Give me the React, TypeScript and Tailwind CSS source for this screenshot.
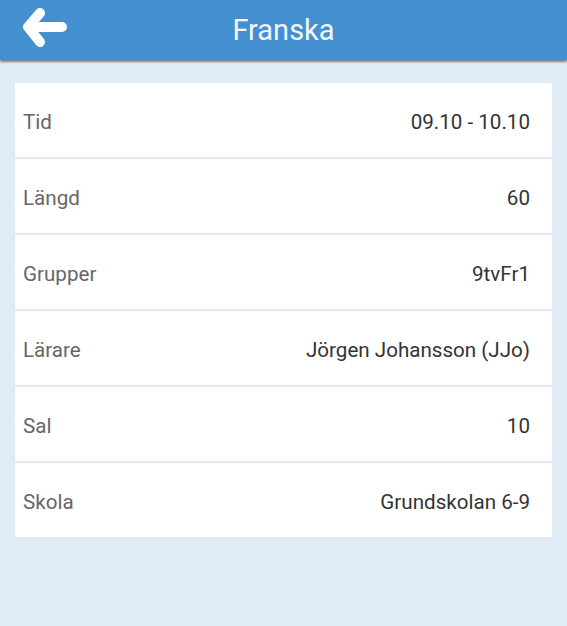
const rows = [
  { label: "Tid", value: "09.10 - 10.10" },
  { label: "Längd", value: "60" },
  { label: "Grupper", value: "9tvFr1" },
  { label: "Lärare", value: "Jörgen Johansson (JJo)" },
  { label: "Sal", value: "10" },
  { label: "Skola", value: "Grundskolan 6-9" },
];

export default function App() {
  return (
    <div className="min-h-[626px] w-full bg-[#e1ebf5] font-['Roboto',sans-serif]">
      {/* Header */}
      <header className="relative flex h-[60px] items-center justify-center bg-[#438fcf] shadow-[0_2px_2px_rgba(0,0,0,0.45)]">
        <button className="absolute left-[18px] top-[4px]">
          <svg width="54" height="50" viewBox="0 0 54 50" fill="none">
            <path
              d="M11 23 H44 M22 9 L10 23 L22 38"
              stroke="#ffffff"
              strokeWidth="10"
              strokeLinecap="round"
              strokeLinejoin="round"
            />
          </svg>
        </button>
        <h1 className="text-[29px] leading-none text-[#f2f6fb]">Franska</h1>
      </header>

      {/* Detail card */}
      <div className="mx-[15px] mt-[23px] bg-white">
        {rows.map((row) => (
          <div
            key={row.label}
            className="flex h-[76px] items-center justify-between border-b-2 border-[#e1e7ef] pl-[8px] pr-[22px] pt-[5px] text-[20.6px]"
          >
            <span className="text-[#666666]">{row.label}</span>
            <span className="text-[#333333]">{row.value}</span>
          </div>
        ))}
      </div>
    </div>
  );
}
